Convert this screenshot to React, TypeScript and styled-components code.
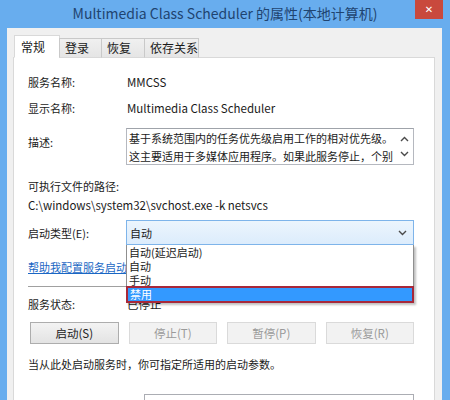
import React from 'react';
import styled, { createGlobalStyle } from 'styled-components';

const FONT = `"Noto Sans CJK SC", "Noto Sans", sans-serif`;

const Global = createGlobalStyle`
  html, body {
    margin: 0;
    padding: 0;
    width: 450px;
    height: 400px;
    overflow: hidden;
    background: #68adee;
  }
`;

const tabs = [
  { label: '常规', width: 46, active: true },
  { label: '登录', width: 43 },
  { label: '恢复', width: 44 },
  { label: '依存关系', width: 55 },
];

const startupOptions = ['自动(延迟启动)', '自动', '手动', '禁用'];
const buttons = [
  { label: '启动(S)', enabled: true },
  { label: '停止(T)' },
  { label: '暂停(P)' },
  { label: '恢复(R)' },
];

const Chevron: React.FC<{ up?: boolean }> = ({ up }) => (
  <svg width="9" height="6" viewBox="0 0 9 6">
    <path
      d={up ? 'M1 5 L4.5 1.5 L8 5' : 'M1 1 L4.5 4.5 L8 1'}
      fill="none"
      stroke="#4a4a4a"
      strokeWidth="1.4"
    />
  </svg>
);

const App: React.FC = () => (
  <Window>
    <Global />
    <TitleBar>
      <span />
      <Title>Multimedia Class Scheduler 的属性(本地计算机)</Title>
      <CloseWrap>
        <CloseButton>✕</CloseButton>
      </CloseWrap>
    </TitleBar>
    <Client>
      <TabRow>
        {tabs.map((t) => (
          <Tab key={t.label} $active={!!t.active} $width={t.width}>
            {t.label}
          </Tab>
        ))}
      </TabRow>
      <Panel>
        <Row $mt={16}>
          <Label>服务名称:</Label>
          <Value>MMCSS</Value>
        </Row>
        <Row $mt={10}>
          <Label>显示名称:</Label>
          <Value>Multimedia Class Scheduler</Value>
        </Row>
        <Row $mt={12} $top>
          <Label $offset={6}>描述:</Label>
          <TextBox>
            <TextLines>
              <TextLine>基于系统范围内的任务优先级启用工作的相对优先级。</TextLine>
              <TextLine>这主要适用于多媒体应用程序。如果此服务停止，个别</TextLine>
            </TextLines>
            <Scroller>
              <Chevron up />
              <Chevron />
            </Scroller>
          </TextBox>
        </Row>
        <PathBlock>
          <div>可执行文件的路径:</div>
          <div>C:\windows\system32\svchost.exe -k netsvcs</div>
        </PathBlock>
        <Row $mt={5}>
          <Label>启动类型(E):</Label>
          <SelectWrap>
            <Select>
              <span>自动</span>
              <Chevron />
            </Select>
            <DropList>
              {startupOptions.map((o, i) => (
                <Option key={o} $selected={i === startupOptions.length - 1}>
                  {o}
                </Option>
              ))}
            </DropList>
          </SelectWrap>
        </Row>
        <HelpLink>帮助我配置服务启动选项。</HelpLink>
        <Separator />
        <Row $mt={9}>
          <Label>服务状态:</Label>
          <Value>已停止</Value>
        </Row>
        <ButtonRow>
          {buttons.map((b) => (
            <Button key={b.label} $enabled={!!b.enabled}>
              {b.label}
            </Button>
          ))}
        </ButtonRow>
        <Note>当从此处启动服务时，你可指定所适用的启动参数。</Note>
        <ParamInput />
      </Panel>
    </Client>
  </Window>
);

const Window = styled.div`
  width: 450px;
  height: 400px;
  background: #68adee;
  display: flex;
  flex-direction: column;
  overflow: hidden;
  font-family: ${FONT};
  font-size: 11px;
  color: #1a1a1a;
`;

const TitleBar = styled.div`
  height: 28px;
  flex: none;
  display: grid;
  grid-template-columns: 1fr auto 1fr;
  align-items: start;
`;

const Title = styled.div`
  font-size: 14px;
  line-height: 26px;
  color: #1f4470;
  white-space: nowrap;
`;

const CloseWrap = styled.div`
  display: flex;
  justify-content: flex-end;
  padding-right: 7px;
`;

const CloseButton = styled.div`
  width: 28px;
  height: 19px;
  background: #c9493d;
  color: #ffffff;
  font-family: "DejaVu Sans", sans-serif;
  font-size: 10px;
  font-weight: bold;
  display: flex;
  align-items: center;
  justify-content: center;
`;

const Client = styled.div`
  flex: 1;
  margin: 0 8px 0 7px;
  background: #f0f0f0;
  padding: 7px 7px 0 6px;
  display: flex;
  flex-direction: column;
  min-height: 0;
`;

const TabRow = styled.div`
  display: flex;
  align-items: flex-end;
  padding-left: 2px;
  position: relative;
  z-index: 1;
  margin-bottom: -1px;
`;

const Tab = styled.div<{ $active: boolean; $width: number }>`
  width: ${({ $width }) => $width}px;
  box-sizing: border-box;
  height: ${({ $active }) => ($active ? 23 : 20)}px;
  padding: ${({ $active }) => ($active ? '3px 0 0 6px' : '1px 0 0 5px')};
  line-height: 16px;
  font-size: 12px;
  background: ${({ $active }) => ($active ? '#ffffff' : 'linear-gradient(#f0f0f0, #e5e5e5)')};
  border: 1px solid ${({ $active }) => ($active ? '#d9d9d9' : '#c9c9c9')};
  border-bottom: ${({ $active }) => ($active ? '1px solid #ffffff' : '1px solid #d9d9d9')};
  margin-left: -1px;
`;

const Panel = styled.div`
  flex: 1;
  background: #ffffff;
  border: 1px solid #d9d9d9;
  padding: 0 20px 0 14px;
  display: flex;
  flex-direction: column;
`;

const Row = styled.div<{ $mt: number; $top?: boolean }>`
  display: grid;
  grid-template-columns: 98px 1fr;
  align-items: ${({ $top }) => ($top ? 'start' : 'center')};
  margin-top: ${({ $mt }) => $mt}px;
  line-height: 16px;
`;

const Label = styled.div<{ $offset?: number }>`
  color: #1a1a1a;
  padding-top: ${({ $offset }) => $offset || 0}px;
  white-space: nowrap;
`;

const Value = styled.div`
  padding-left: 1px;
  font-size: 11.5px;
  white-space: nowrap;
`;

const TextBox = styled.div`
  height: 37px;
  box-sizing: border-box;
  border: 1px solid #b5b8bf;
  border-top-color: #9fa3aa;
  display: flex;
  background: #ffffff;
`;

const TextLines = styled.div`
  flex: 1;
  min-width: 0;
  padding: 0 0 0 2px;
  line-height: 18px;
`;

const TextLine = styled.div`
  white-space: nowrap;
  overflow: hidden;
`;

const Scroller = styled.div`
  width: 17px;
  display: flex;
  flex-direction: column;
  align-items: center;
  justify-content: space-around;
  padding: 2px 0;
`;

const PathBlock = styled.div`
  margin-top: 12px;
  line-height: 19px;
  font-size: 11.5px;

  div:first-child {
    font-size: 11px;
  }
`;

const SelectWrap = styled.div`
  position: relative;
`;

const Select = styled.div`
  height: 25px;
  box-sizing: border-box;
  border: 1px solid #7eb4ea;
  background: linear-gradient(#ecf5fd, #dcecfc);
  display: flex;
  align-items: center;
  justify-content: space-between;
  padding: 0 6px 0 3px;
`;

const DropList = styled.div`
  position: absolute;
  top: 100%;
  left: 0;
  right: 0;
  background: #ffffff;
  border: 1px solid #8f8f8f;
  border-top: none;
  box-shadow: 2px 2px 2px rgba(0, 0, 0, 0.25);
  z-index: 2;
`;

const Option = styled.div<{ $selected: boolean }>`
  height: ${({ $selected }) => ($selected ? 17 : 14)}px;
  box-sizing: border-box;
  line-height: ${({ $selected }) => ($selected ? 13 : 14)}px;
  padding-left: 2px;
  background: ${({ $selected }) => ($selected ? '#3399ff' : '#ffffff')};
  color: ${({ $selected }) => ($selected ? '#ffffff' : '#1a1a1a')};
  border: ${({ $selected }) => ($selected ? '2px solid #a8283a' : 'none')};
  margin: ${({ $selected }) => ($selected ? '-1px -1px -1px' : '0')};
`;

const HelpLink = styled.a`
  margin-top: 14px;
  line-height: 16px;
  color: #1a67c4;
  text-decoration: underline;
  white-space: nowrap;
`;

const Separator = styled.div`
  margin-top: 11px;
  height: 1px;
  background: #a0a0a0;
`;

const ButtonRow = styled.div`
  display: grid;
  grid-template-columns: repeat(4, 1fr);
  gap: 10px;
  margin: 10px 0 0 2px;
`;

const Button = styled.div<{ $enabled: boolean }>`
  height: 22px;
  box-sizing: border-box;
  display: flex;
  align-items: center;
  justify-content: center;
  font-size: 11.5px;
  color: ${({ $enabled }) => ($enabled ? '#222222' : '#9a9a9a')};
  background: ${({ $enabled }) => ($enabled ? 'linear-gradient(#f3f3f3, #e3e3e3)' : '#f2f2f2')};
  border: 1px solid ${({ $enabled }) => ($enabled ? '#adadad' : '#dadada')};
`;

const Note = styled.div`
  margin-top: 12px;
  line-height: 16px;
  white-space: nowrap;
`;

const ParamInput = styled.div`
  margin: 22px 0 0 116px;
  height: 22px;
  flex: none;
  box-sizing: border-box;
  border: 1px solid #abadb3;
`;

export default App;
